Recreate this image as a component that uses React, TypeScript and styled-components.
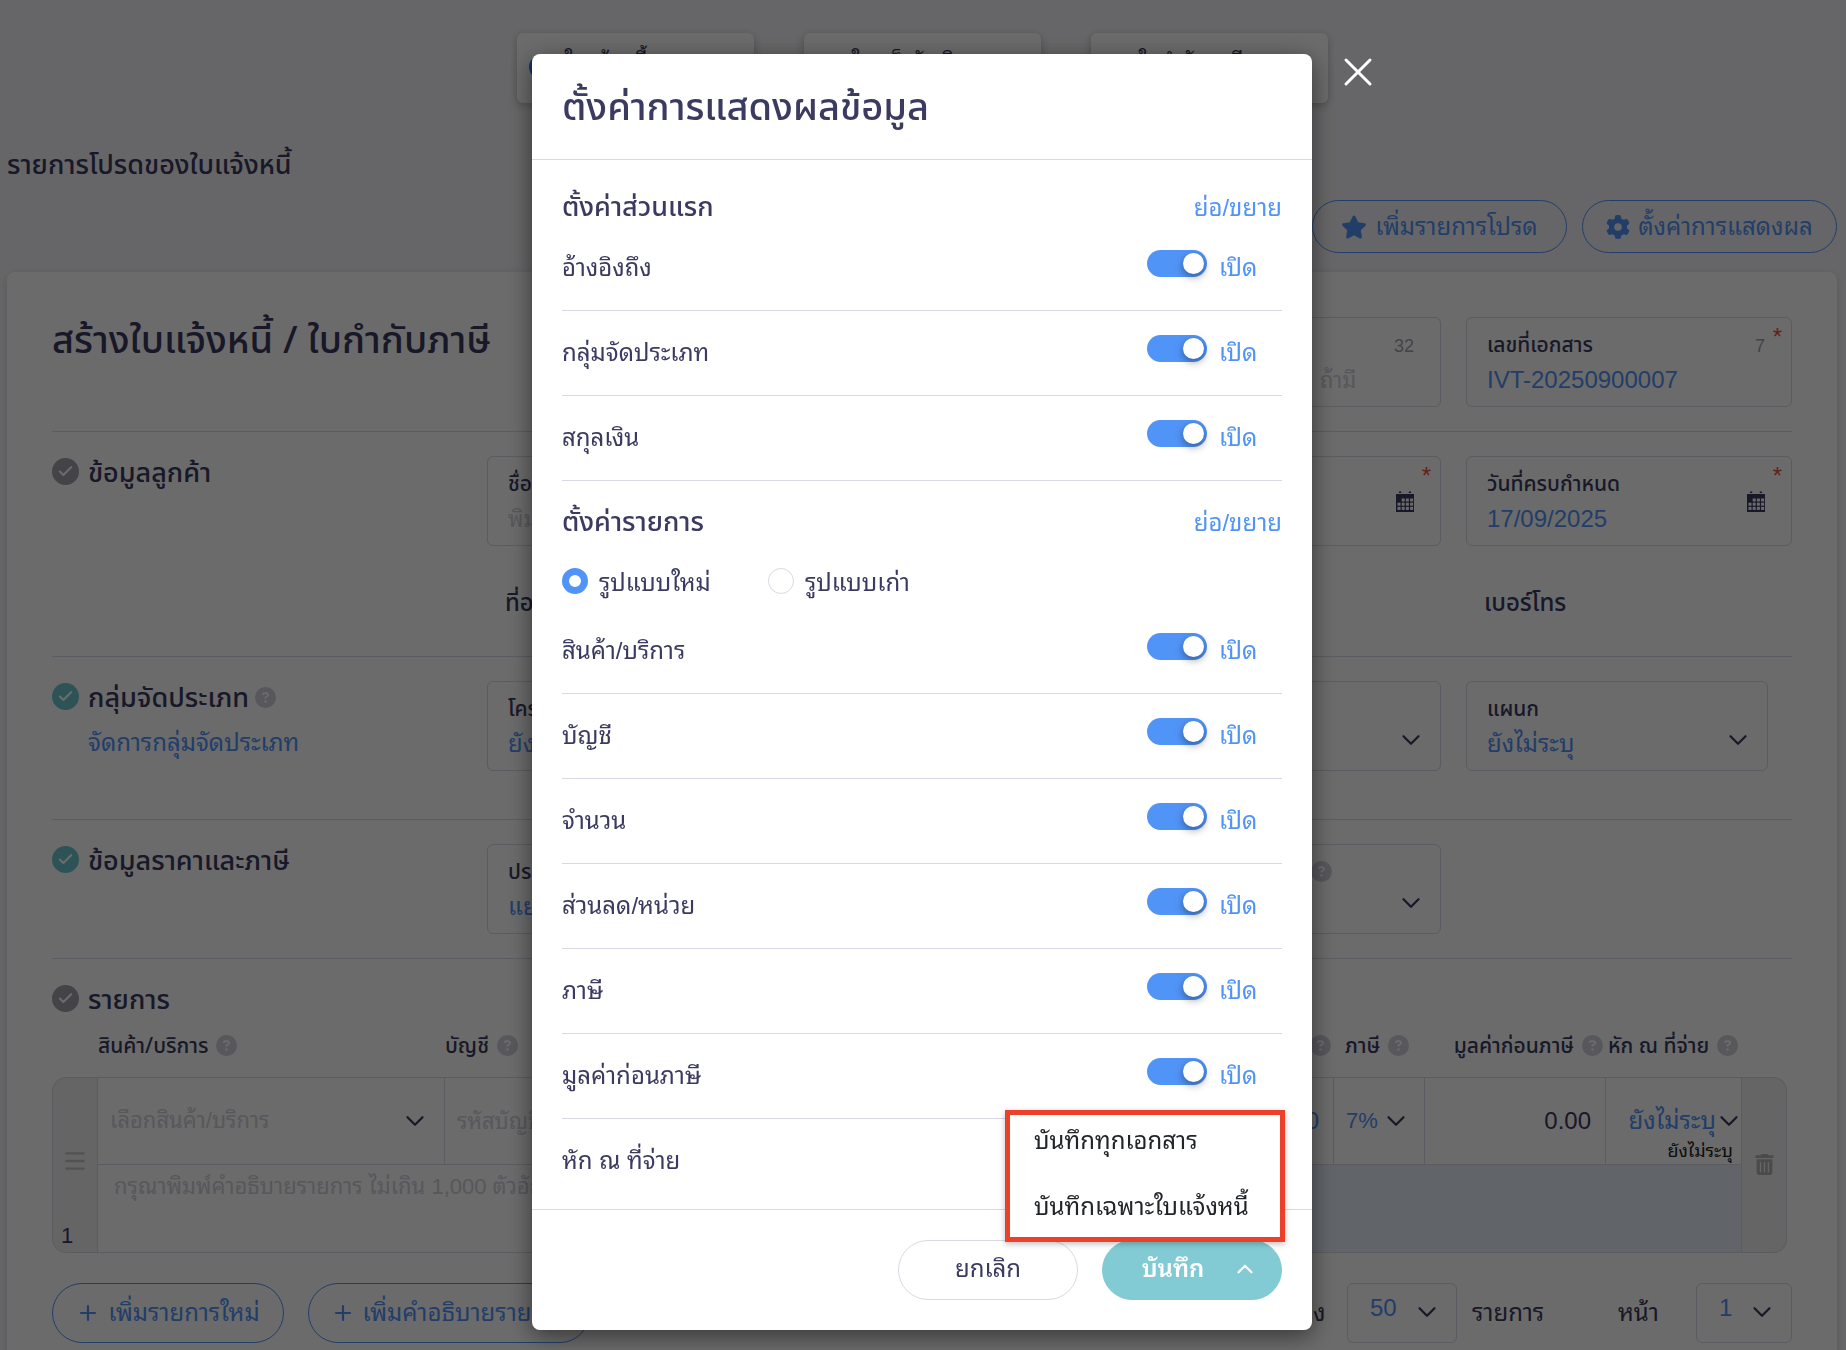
import React, { useId } from "react";
import styled, { createGlobalStyle } from "styled-components";
import { Check, ChevronDown, ChevronUp, Menu, Plus, X } from "lucide-react";
import { FaStar, FaGear, FaTrashCan, FaCircleQuestion } from "react-icons/fa6";

const ink = "#3b3b61";
const blue = "#5194f8";
const teal = "#82cbd4";
const line = "#d9d9e6";
const body = `"Liberation Sans", "Noto Sans Thai Looped", sans-serif`;
const display = `"Noto Sans", "Noto Sans Thai", sans-serif`;

const GlobalStyle = createGlobalStyle`
  * { box-sizing: border-box; }
  body { margin: 0; overflow: hidden; background: #f4f4f8; font-family: ${body}; color: ${ink}; font-size: 24px; line-height: 32px; }
  button, input, select, textarea { font: inherit; color: inherit; margin: 0; }
  h1, h2, h3, p, fieldset { margin: 0; padding: 0; border: 0; }
  a { color: ${blue}; text-decoration: none; }
`;

const Page = styled.div`
  height: 100vh;
  overflow: hidden;
  padding: 33px 9px 0 7px;
`;

const DocTabs = styled.nav`
  display: flex;
  justify-content: center;
  gap: 50px;
`;

const DocTab = styled.a`
  display: flex;
  gap: 12px;
  width: 237px;
  height: 70px;
  padding: 14px 12px;
  border-radius: 6px;
  background: #fff;
  box-shadow: 0 2px 8px rgba(0, 0, 0, 0.25);
  color: ${ink};
  font-size: 21px;
  line-height: 28px;
`;

const TabDot = styled.span`
  width: 24px;
  height: 24px;
  margin-top: 8px;
  border-radius: 50%;
  background: #2f80e6;
`;

const FavTitle = styled.h2`
  margin-top: 44px;
  font-family: ${display};
  font-size: 27px;
  line-height: 34px;
  font-weight: 500;
`;

const TopActions = styled.div`
  display: flex;
  justify-content: flex-end;
  gap: 15px;
  margin: 19px 0;
`;

const OutlineButton = styled.button<{ $tall?: boolean; $w: number }>`
  display: flex;
  align-items: center;
  justify-content: center;
  gap: 8px;
  width: ${(p) => p.$w}px;
  height: ${(p) => (p.$tall ? 60 : 53)}px;
  padding: 0;
  border: 1px solid ${blue};
  border-radius: 30px;
  background: transparent;
  color: ${blue};
  white-space: nowrap;
`;

const Sheet = styled.main`
  height: 1200px;
  padding: 45px 45px 0;
  border-radius: 8px;
  background: #fff;
  box-shadow: 0 2px 8px rgba(0, 0, 0, 0.15);
`;

const Section = styled.section<{ $h: number }>`
  display: grid;
  grid-template-columns: 410px 1fr 325px 326px;
  column-gap: 25px;
  align-content: start;
  min-height: ${(p) => p.$h}px;
  margin-bottom: 24px;
  border-bottom: 1px solid ${line};
`;

const DocTitle = styled.h1`
  font-family: ${display};
  font-size: 38px;
  line-height: 42px;
  font-weight: 500;
  white-space: nowrap;
`;

const SectionHead = styled.div`
  display: flex;
  gap: 9px;
`;

const StatusDot = styled.span<{ $done?: boolean }>`
  display: grid;
  place-items: center;
  flex: none;
  width: 27px;
  height: 27px;
  margin-top: 2px;
  border-radius: 50%;
  background: ${(p) => (p.$done ? "#6cc5cd" : "#a0a0ac")};
  color: #fff;
`;

const SectionTitle = styled.h3`
  display: flex;
  align-items: center;
  gap: 6px;
  font-family: ${display};
  font-size: 27px;
  line-height: 32px;
  font-weight: 500;
  white-space: nowrap;
`;

const SubLink = styled.a`
  display: block;
  margin-top: 14px;
`;

const Help = styled(FaCircleQuestion)`
  flex: none;
  width: 21px;
  height: 21px;
  color: #cfcfdb;
`;

const FieldBox = styled.div<{ $narrow?: boolean }>`
  position: relative;
  height: 90px;
  margin-right: ${(p) => (p.$narrow ? 24 : 0)}px;
  padding: 12px 20px 0;
  border: 1px solid ${line};
  border-radius: 6px;
`;

const FieldLabel = styled.label`
  display: flex;
  align-items: center;
  gap: 8px;
  height: 28px;
  font-family: ${display};
  font-size: 21px;
  line-height: 28px;
  font-weight: 500;
  white-space: nowrap;
`;

const FieldInput = styled.input<{ $indent?: number }>`
  display: block;
  width: 100%;
  height: 32px;
  margin-top: 6px;
  padding: 0 0 0 ${(p) => p.$indent ?? 0}px;
  border: 0;
  outline: 0;
  background: transparent;
  color: ${blue};
  &::placeholder { color: #cfcfdb; opacity: 1; font-size: 22px; }
`;

const FieldSelect = styled.select`
  display: block;
  width: 100%;
  height: 32px;
  margin-top: 6px;
  padding: 0;
  border: 0;
  outline: 0;
  appearance: none;
  background: transparent;
  color: ${blue};
`;

const Star = styled.span`
  position: absolute;
  top: 3px;
  right: 9px;
  font-size: 24px;
  line-height: 32px;
  color: #e8503a;
`;

const Counter = styled.span`
  position: absolute;
  top: 14px;
  right: 26px;
  font-size: 18px;
  line-height: 28px;
  color: #a0a0ac;
`;

const FieldIcon = styled.span`
  position: absolute;
  right: 26px;
  top: 34px;
  display: flex;
`;

const SelectIcon = styled.span`
  position: absolute;
  right: 14px;
  bottom: 15px;
  display: flex;
  pointer-events: none;
`;

const InfoLabel = styled.p<{ $col: number }>`
  grid-column: ${(p) => p.$col};
  margin-top: 40px;
  padding-left: 18px;
  font-family: ${display};
  line-height: 32px;
  font-weight: 500;
`;

const Items = styled.table`
  width: calc(100% - 5px);
  margin-top: 10px;
  table-layout: fixed;
  border-collapse: separate;
  border-spacing: 0;
`;

const Th = styled.th<{ $right?: boolean; $pad?: number }>`
  height: 52px;
  padding: 0 ${(p) => (p.$right ? 3 : 0)}px 12px ${(p) => p.$pad ?? 0}px;
  font-family: ${display};
  font-size: 21px;
  line-height: 28px;
  font-weight: 500;
  white-space: nowrap;
`;

const ThInner = styled.span<{ $right?: boolean }>`
  display: flex;
  align-items: center;
  justify-content: ${(p) => (p.$right ? "flex-end" : "flex-start")};
  gap: 8px;
`;

const Td = styled.td`
  position: relative;
  height: 87px;
  padding: 0 12px;
  border-top: 1px solid ${line};
  border-right: 1px solid ${line};
  white-space: nowrap;
`;

const NoteTd = styled(Td)<{ $tint?: boolean }>`
  height: 89px;
  padding: 6px 16px;
  vertical-align: top;
  border-bottom: 1px solid ${line};
  border-right-width: ${(p) => (p.$tint ? 1 : 0)}px;
  background: ${(p) => (p.$tint ? "#e8f0fd" : "transparent")};
`;

const HandleTd = styled(Td)<{ $end?: boolean }>`
  padding: 0;
  border: 1px solid ${line};
  border-left-width: ${(p) => (p.$end ? 0 : 1)}px;
  border-radius: ${(p) => (p.$end ? "0 14px 14px 0" : "14px 0 0 14px")};
  background: #f1f1f1;
  color: #c4c4c4;
  text-align: center;
`;

const IconButton = styled.button`
  display: inline-flex;
  padding: 0 0 4px;
  border: 0;
  background: none;
  vertical-align: middle;
`;

const RowNo = styled.span`
  position: absolute;
  left: 8px;
  bottom: 2px;
  font-size: 22px;
  line-height: 28px;
  color: ${ink};
`;

const CellInput = styled.input<{ $right?: boolean; $tone?: string }>`
  display: block;
  width: 100%;
  height: 32px;
  padding: 0 ${(p) => (p.$right ? 2 : 0)}px 0 0;
  border: 0;
  outline: 0;
  background: none;
  text-align: ${(p) => (p.$right ? "right" : "left")};
  color: ${(p) => p.$tone ?? ink};
  &::placeholder { color: #cfcfdb; opacity: 1; font-size: 22px; }
`;

const CellSelect = styled.select<{ $right?: boolean; $muted?: boolean; $small?: boolean }>`
  display: block;
  width: 100%;
  height: 32px;
  padding: 0 ${(p) => (p.$right ? 13 : 0)}px 0 0;
  border: 0;
  outline: 0;
  appearance: none;
  background: none;
  font-size: ${(p) => (p.$muted || p.$small ? 22 : 24)}px;
  text-align-last: ${(p) => (p.$right ? "right" : "left")};
  color: ${(p) => (p.$muted ? "#cfcfdb" : blue)};
`;

const CellChevron = styled.span<{ $r: number }>`
  position: absolute;
  right: ${(p) => p.$r}px;
  top: 28px;
  display: flex;
  pointer-events: none;
`;

const TaxNote = styled.small`
  position: absolute;
  right: 8px;
  bottom: 1px;
  font-size: 18px;
  line-height: 24px;
  color: #222;
`;

const NoteInput = styled.textarea`
  display: block;
  width: 100%;
  height: 64px;
  padding: 0;
  border: 0;
  outline: 0;
  resize: none;
  background: none;
  &::placeholder { color: #cfcfdb; opacity: 1; font-size: 22px; }
`;

const TableFoot = styled.div`
  display: flex;
  align-items: center;
  gap: 24px;
  margin-top: 30px;
`;

const Pager = styled.div`
  display: flex;
  align-items: center;
  margin-left: auto;
`;

const PagerText = styled.span<{ $w: number }>`
  width: ${(p) => p.$w}px;
  white-space: nowrap;
`;

const PagerSelect = styled.div<{ $w: number }>`
  position: relative;
  width: ${(p) => p.$w}px;
  height: 60px;
  padding: 8px 22px;
  border: 1px solid ${line};
  border-radius: 6px;
`;

const PagerInner = styled.select`
  display: block;
  width: 100%;
  height: 32px;
  padding: 0;
  border: 0;
  appearance: none;
  background: none;
  color: ${blue};
`;

/* ---------- dialog ---------- */

const Overlay = styled.div`
  position: fixed;
  inset: 0;
  display: flex;
  justify-content: center;
  align-items: flex-start;
  padding: 54px 2px 0 0;
  background: rgba(0, 0, 0, 0.58);
`;

const Dialog = styled.div`
  position: relative;
  width: 780px;
  border-radius: 8px;
  background: #fff;
  box-shadow: 0 6px 24px rgba(0, 0, 0, 0.5);
`;

const CloseButton = styled.button`
  position: absolute;
  left: 100%;
  top: -6px;
  display: flex;
  margin-left: 22px;
  padding: 0;
  border: 0;
  background: none;
  color: #fff;
`;

const DialogHead = styled.header`
  padding: 27px 30px 30px;
  border-bottom: 1px solid ${line};
`;

const DialogTitle = styled.h2`
  font-family: ${display};
  font-size: 38px;
  line-height: 48px;
  font-weight: 500;
`;

const DialogBody = styled.div`
  padding: 32px 30px 5px;
`;

const GroupHead = styled.div`
  display: flex;
  align-items: center;
  justify-content: space-between;
  height: 32px;
`;

const GroupTitle = styled.h3`
  padding-bottom: 4px;
  font-family: ${display};
  font-size: 27px;
  line-height: 32px;
  font-weight: 500;
`;

const Toggles = styled.div<{ $top: number; $bottom: number }>`
  margin: ${(p) => p.$top}px 0 ${(p) => p.$bottom}px;
`;

const ToggleRow = styled.div<{ $plain?: boolean }>`
  display: flex;
  align-items: center;
  height: 85px;
  border-bottom: 1px solid ${(p) => (p.$plain ? "transparent" : line)};
`;

const RowLabel = styled.label`
  flex: 1;
`;

const Switch = styled.input`
  appearance: none;
  width: 60px;
  height: 27px;
  margin: 0 12px 10px 0;
  border-radius: 14px;
  background: ${blue};
  &::before {
    content: "";
    display: block;
    width: 21px;
    height: 21px;
    margin: 3px 3px 3px 36px;
    border-radius: 50%;
    background: #fff;
    box-shadow: 0 3px 8px rgba(0, 0, 0, 0.4);
  }
`;

const SwitchState = styled.span`
  width: 63px;
  color: ${blue};
`;

const Radios = styled.fieldset`
  display: flex;
  margin-top: 28px;
`;

const RadioLabel = styled.label`
  display: flex;
  align-items: center;
  width: 206px;
  gap: 11px;
  white-space: nowrap;
`;

const Radio = styled.input`
  appearance: none;
  width: 26px;
  height: 26px;
  margin: 0 0 4px;
  border: 1px solid ${line};
  border-radius: 50%;
  &:checked { border: 7px solid ${blue}; }
`;

const DialogFoot = styled.footer`
  position: relative;
  display: flex;
  justify-content: flex-end;
  gap: 24px;
  padding: 30px;
  border-top: 1px solid ${line};
`;

const FootButton = styled.button<{ $primary?: boolean }>`
  display: flex;
  align-items: center;
  justify-content: center;
  gap: ${(p) => (p.$primary ? 28 : 0)}px;
  width: 180px;
  height: 60px;
  padding: 0 0 2px ${(p) => (p.$primary ? 16 : 0)}px;
  border: 1px solid ${(p) => (p.$primary ? teal : line)};
  border-radius: 30px;
  background: ${(p) => (p.$primary ? teal : "#fff")};
  color: ${(p) => (p.$primary ? "#fff" : ink)};
  font-weight: ${(p) => (p.$primary ? 600 : 400)};
`;

const SaveMenu = styled.div`
  position: absolute;
  right: 27px;
  bottom: 88px;
  width: 280px;
  height: 132px;
  border: 5px solid #ec4128;
  background: #fff;
  box-shadow: 0 2px 6px rgba(0, 0, 0, 0.25);
`;

const MenuItem = styled.button`
  display: block;
  width: 100%;
  height: 66px;
  padding: 0 24px 14px;
  border: 0;
  background: none;
  color: #212529;
  text-align: left;
  white-space: nowrap;
`;

function CalendarIcon() {
  const cells = [];
  for (let r = 0; r < 3; r++)
    for (let c = 0; c < 4; c++)
      if (r > 0 || c > 0)
        cells.push(<rect key={`${r}${c}`} x={1.5 + c * 4.2} y={7.5 + r * 4.2} width="3" height="3" fill="#fff" />);
  return (
    <svg width="18" height="21" viewBox="0 0 18 21" aria-hidden="true">
      <path d="M0 3h18v18H0zM3 0.5h2.2v1.6H3zM12.8 0.5H15v1.6h-2.2z" fill={ink} />
      {cells}
    </svg>
  );
}

function Chevron() {
  return <ChevronDown size={30} strokeWidth={1.8} />;
}

type FieldProps = {
  label: string;
  value?: string;
  placeholder?: string;
  indent?: number;
  count?: string;
  required?: boolean;
  date?: boolean;
  select?: boolean;
  help?: boolean;
  narrow?: boolean;
  labelIndent?: number;
};

const LabelText = styled.span<{ $w?: number }>`
  min-width: ${(p) => p.$w ?? 0}px;
`;

function Field(p: FieldProps) {
  const id = useId();
  return (
    <FieldBox $narrow={p.narrow}>
      <FieldLabel htmlFor={id}>
        <LabelText $w={p.labelIndent}>{p.label}</LabelText>
        {p.help && <Help />}
      </FieldLabel>
      {p.select ? (
        <FieldSelect id={id}>
          <option>{p.value}</option>
        </FieldSelect>
      ) : (
        <FieldInput id={id} defaultValue={p.value} placeholder={p.placeholder} $indent={p.indent} />
      )}
      {p.count && <Counter>{p.count}</Counter>}
      {p.required && <Star>*</Star>}
      {p.date && <FieldIcon><CalendarIcon /></FieldIcon>}
      {p.select && <SelectIcon><Chevron /></SelectIcon>}
    </FieldBox>
  );
}

function Heading({ title, done, help, link }: { title: string; done?: boolean; help?: boolean; link?: string }) {
  return (
    <SectionHead>
      <StatusDot $done={done}><Check size={17} strokeWidth={3} /></StatusDot>
      <div>
        <SectionTitle>{title}{help && <Help />}</SectionTitle>
        {link && <SubLink href="#">{link}</SubLink>}
      </div>
    </SectionHead>
  );
}

function Toggle({ label, plain }: { label: string; plain?: boolean }) {
  const id = useId();
  return (
    <ToggleRow $plain={plain}>
      <RowLabel htmlFor={id}>{label}</RowLabel>
      {!plain && <Switch id={id} type="checkbox" role="switch" defaultChecked />}
      {!plain && <SwitchState>เปิด</SwitchState>}
    </ToggleRow>
  );
}

const firstGroup = ["อ้างอิงถึง", "กลุ่มจัดประเภท", "สกุลเงิน"];
const itemGroup = ["สินค้า/บริการ", "บัญชี", "จำนวน", "ส่วนลด/หน่วย", "ภาษี", "มูลค่าก่อนภาษี"];

export default function App() {
  return (
    <>
      <GlobalStyle />
      <Page>
        <DocTabs>
          <DocTab href="#"><TabDot />ใบแจ้งหนี้</DocTab>
          <DocTab href="#"><TabDot />ใบเสร็จรับเงิน</DocTab>
          <DocTab href="#"><TabDot />ใบกำกับภาษี</DocTab>
        </DocTabs>
        <FavTitle>รายการโปรดของใบแจ้งหนี้</FavTitle>
        <TopActions>
          <OutlineButton $w={255}><FaStar size={26} />เพิ่มรายการโปรด</OutlineButton>
          <OutlineButton $w={255}><FaGear size={24} />ตั้งค่าการแสดงผล</OutlineButton>
        </TopActions>
        <Sheet>
          <Section $h={115}>
            <DocTitle>สร้างใบแจ้งหนี้ / ใบกำกับภาษี</DocTitle>
            <span />
            <Field label="" placeholder="ถ้ามี" indent={183} count="32" />
            <Field label="เลขที่เอกสาร" value="IVT-20250900007" count="7" required />
          </Section>
          <Section $h={201}>
            <Heading title="ข้อมูลลูกค้า" />
            <Field label="ชื่อลูกค้า" placeholder="พิมพ์ชื่อลูกค้า" />
            <Field label="" date required />
            <Field label="วันที่ครบกำหนด" value="17/09/2025" date required />
            <InfoLabel $col={2}>ที่อยู่</InfoLabel>
            <InfoLabel $col={4}>เบอร์โทร</InfoLabel>
          </Section>
          <Section $h={139}>
            <Heading title="กลุ่มจัดประเภท" done help link="จัดการกลุ่มจัดประเภท" />
            <Field label="โครงการ" value="ยังไม่ระบุ" select />
            <Field label="" value="" select />
            <Field label="แผนก" value="ยังไม่ระบุ" select narrow />
          </Section>
          <Section $h={115}>
            <Heading title="ข้อมูลราคาและภาษี" done />
            <Field label="ประเภทราคา" value="แยกภาษี" select />
            <Field label="" value="" select help labelIndent={166} />
          </Section>
          <Heading title="รายการ" />
          <Items>
            <colgroup>
              <col style={{ width: 46 }} />
              <col style={{ width: 347 }} />
              <col />
              <col style={{ width: 200 }} />
              <col style={{ width: 91 }} />
              <col style={{ width: 181 }} />
              <col style={{ width: 136 }} />
              <col style={{ width: 45 }} />
            </colgroup>
            <thead>
              <tr>
                <Th />
                <Th><ThInner>สินค้า/บริการ<Help /></ThInner></Th>
                <Th><ThInner>บัญชี<Help /></ThInner></Th>
                <Th $right><ThInner $right><Help /></ThInner></Th>
                <Th $pad={11}><ThInner>ภาษี<Help /></ThInner></Th>
                <Th $right><ThInner $right>มูลค่าก่อนภาษี<Help /></ThInner></Th>
                <Th $pad={2}><ThInner>หัก ณ ที่จ่าย<Help /></ThInner></Th>
                <Th />
              </tr>
            </thead>
            <tbody>
              <tr>
                <HandleTd rowSpan={2}>
                  <Menu size={26} strokeWidth={2.2} />
                  <RowNo>1</RowNo>
                </HandleTd>
                <Td>
                  <CellSelect $muted aria-label="สินค้า/บริการ"><option>เลือกสินค้า/บริการ</option></CellSelect>
                  <CellChevron $r={14}><Chevron /></CellChevron>
                </Td>
                <Td><CellInput aria-label="บัญชี" placeholder="รหัสบัญชี" /></Td>
                <Td><CellInput $right $tone={blue} aria-label="ส่วนลด" defaultValue="0.00" /></Td>
                <Td>
                  <CellSelect $small aria-label="ภาษี"><option>7%</option></CellSelect>
                  <CellChevron $r={13}><Chevron /></CellChevron>
                </Td>
                <Td><CellInput $right aria-label="มูลค่าก่อนภาษี" defaultValue="0.00" /></Td>
                <Td>
                  <CellSelect $right aria-label="หัก ณ ที่จ่าย"><option>ยังไม่ระบุ</option></CellSelect>
                  <CellChevron $r={-3}><Chevron /></CellChevron>
                  <TaxNote>ยังไม่ระบุ</TaxNote>
                </Td>
                <HandleTd $end rowSpan={2}>
                  <IconButton aria-label="ลบรายการ"><FaTrashCan size={21} color="#b4b4b4" /></IconButton>
                </HandleTd>
              </tr>
              <tr>
                <NoteTd colSpan={2}>
                  <NoteInput aria-label="คำอธิบาย" placeholder="กรุณาพิมพ์คำอธิบายรายการ ไม่เกิน 1,000 ตัวอักษร" />
                </NoteTd>
                <NoteTd $tint colSpan={4} />
              </tr>
            </tbody>
          </Items>
          <TableFoot>
            <OutlineButton $tall $w={232}><Plus size={24} strokeWidth={2.2} />เพิ่มรายการใหม่</OutlineButton>
            <OutlineButton $tall $w={282}><Plus size={24} strokeWidth={2.2} />เพิ่มคำอธิบายรายการ</OutlineButton>
            <Pager>
              <PagerText $w={78}>แสดง</PagerText>
              <PagerSelect $w={110}>
                <PagerInner aria-label="แสดง"><option>50</option></PagerInner>
                <SelectIcon><Chevron /></SelectIcon>
              </PagerSelect>
              <PagerText $w={15} />
              <PagerText $w={146}>รายการ</PagerText>
              <PagerText $w={78}>หน้า</PagerText>
              <PagerSelect $w={96}>
                <PagerInner aria-label="หน้า"><option>1</option></PagerInner>
                <SelectIcon><Chevron /></SelectIcon>
              </PagerSelect>
            </Pager>
          </TableFoot>
        </Sheet>
      </Page>

      <Overlay>
        <Dialog role="dialog" aria-modal="true" aria-label="ตั้งค่าการแสดงผลข้อมูล">
          <CloseButton aria-label="ปิด"><X size={48} strokeWidth={1.5} /></CloseButton>
          <DialogHead><DialogTitle>ตั้งค่าการแสดงผลข้อมูล</DialogTitle></DialogHead>
          <DialogBody>
            <GroupHead>
              <GroupTitle>ตั้งค่าส่วนแรก</GroupTitle>
              <a href="#">ย่อ/ขยาย</a>
            </GroupHead>
            <Toggles $top={2} $bottom={26}>{firstGroup.map((t) => <Toggle key={t} label={t} />)}</Toggles>
            <GroupHead>
              <GroupTitle>ตั้งค่ารายการ</GroupTitle>
              <a href="#">ย่อ/ขยาย</a>
            </GroupHead>
            <Radios>
              <RadioLabel><Radio type="radio" name="layout" defaultChecked />รูปแบบใหม่</RadioLabel>
              <RadioLabel><Radio type="radio" name="layout" />รูปแบบเก่า</RadioLabel>
            </Radios>
            <Toggles $top={10} $bottom={0}>
              {itemGroup.map((t) => <Toggle key={t} label={t} />)}
              <Toggle label="หัก ณ ที่จ่าย" plain />
            </Toggles>
          </DialogBody>
          <DialogFoot>
            <FootButton>ยกเลิก</FootButton>
            <FootButton $primary>บันทึก<ChevronUp size={26} strokeWidth={2} /></FootButton>
            <SaveMenu>
              <MenuItem>บันทึกทุกเอกสาร</MenuItem>
              <MenuItem>บันทึกเฉพาะใบแจ้งหนี้</MenuItem>
            </SaveMenu>
          </DialogFoot>
        </Dialog>
      </Overlay>
    </>
  );
}
